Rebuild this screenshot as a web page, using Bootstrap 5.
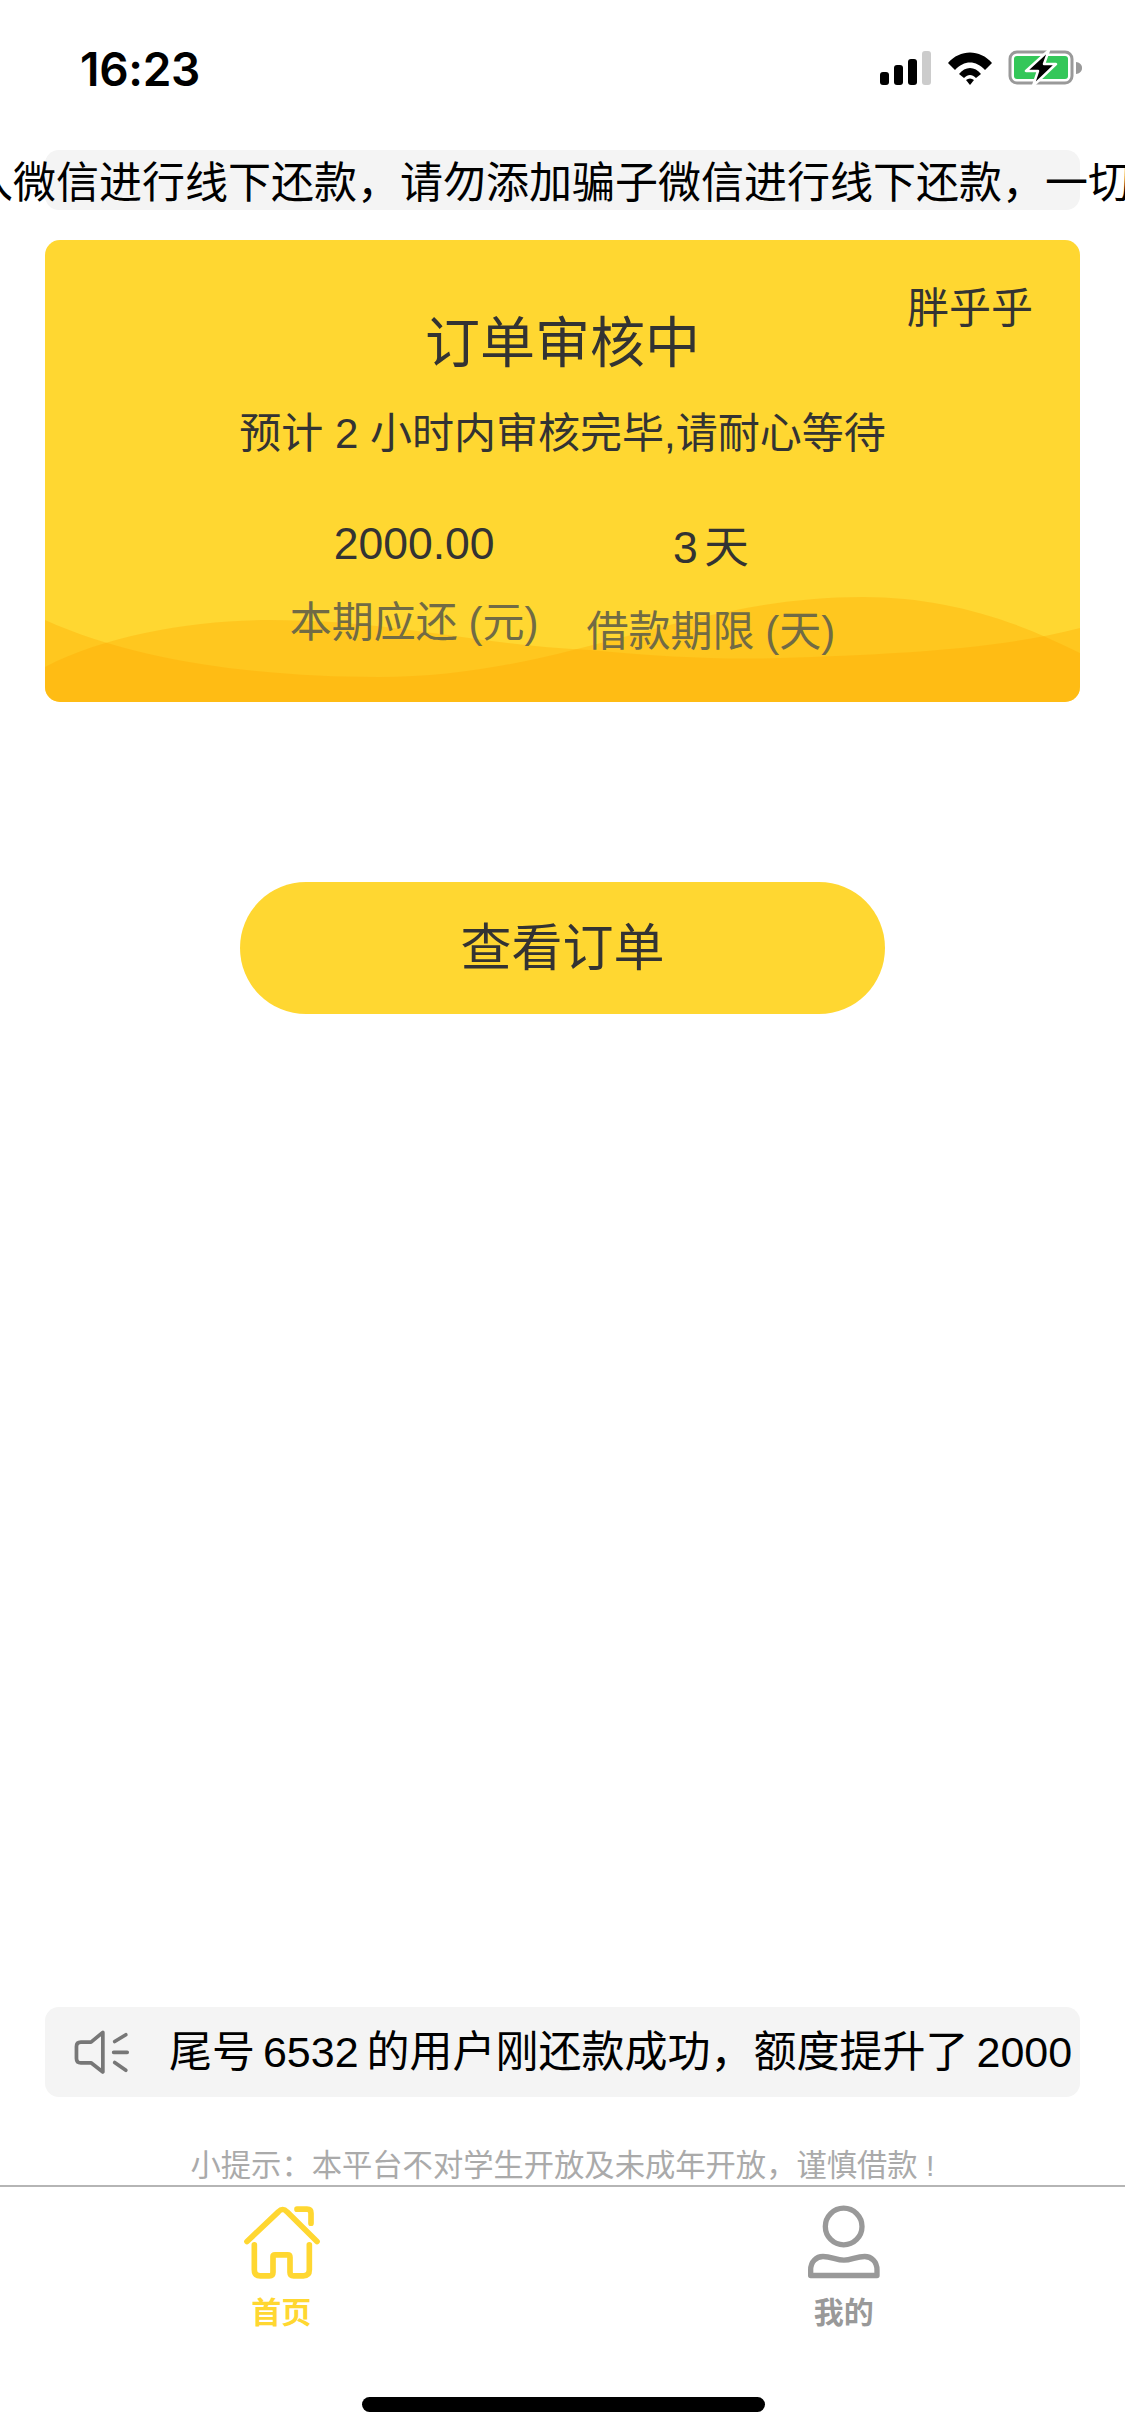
<!DOCTYPE html>
<html lang="zh-CN">

<head>
  <meta charset="UTF-8" />
  <meta name="viewport" content="width=device-width, initial-scale=1" />
  <title>订单审核中</title>
  <link href="https://cdn.jsdelivr.net/npm/bootstrap@5.3.2/dist/css/bootstrap.min.css" rel="stylesheet">
  <style>
    body {
      background: #fff;
      color: #333;
      font-family: "Liberation Sans", "Noto Sans CJK SC", sans-serif;
    }

    .app-shell {
      width: 1125px;
      height: 2436px;
      overflow: hidden;
    }

    /* status bar */
    .status-row {
      height: 150px;
      padding: 42px 42px 0 80px;
    }

    .status-time {
      font-family: Inter, "Liberation Sans", sans-serif;
      font-size: 46px;
      font-weight: 600;
      line-height: 54px;
      color: #000;
      letter-spacing: -.3px;
    }

    .status-icons {
      padding-top: 8px;
      gap: 15px;
    }

    /* grey strips */
    .grey-strip {
      margin: 0 45px;
      background: #f4f4f4;
      border-radius: 14px;
    }

    .notice-strip {
      height: 60px;
      font-size: 43px;
      line-height: 66px;
      color: #000;
      white-space: nowrap;
    }

    .notice-text {
      margin-left: -75px;
    }

    /* order card */
    .order-card {
      margin: 30px 45px 0;
      height: 462px;
      background: #ffd731;
      border: 0;
      border-radius: 15px;
      overflow: hidden;
    }

    .wave-layer {
      position: absolute;
      left: 0;
      top: 0;
    }

    .order-body {
      position: relative;
      padding: 0;
      text-align: center;
    }

    .order-owner {
      position: absolute;
      right: 47px;
      top: 39px;
      font-size: 42px;
      line-height: 60px;
    }

    .order-title {
      padding-top: 63px;
      font-size: 55px;
      line-height: 80px;
    }

    .order-hint {
      margin-top: 21px;
      font-size: 42px;
      line-height: 60px;
    }

    .order-stats {
      margin-top: 50px;
      gap: 48px;
    }

    .stat-value {
      font-size: 44.500px;
      line-height: 60px;
    }

    .stat-days {
      word-spacing: -6px;
    }

    .stat-label {
      font-size: 42px;
      line-height: 60px;
      margin-top: 19px;
      color: #716b45;
      word-spacing: -1px;
    }

    .stat-shift {
      padding-top: 4px;
    }

    .stat-shift .stat-label {
      margin-top: 24px;
    }

    /* button */
    .order-btn {
      display: block;
      width: 645px;
      height: 132px;
      margin: 180px auto 0;
      background: #ffd731;
      border: 0;
      color: #333;
      font-size: 51px;
      line-height: 134px;
      padding: 0;
    }

    /* bottom */
    .repay-strip {
      height: 90px;
      padding-left: 29px;
      font-size: 43px;
      color: #000;
      white-space: nowrap;
    }

    .repay-text {
      margin-left: 39px;
      word-spacing: -4px;
    }

    .tip-line {
      margin-top: 49px;
      height: 39px;
      font-size: 30.300px;
      line-height: 40px;
      color: #aaa;
      text-align: center;
    }

    .tab-row {
      border-top: 2px solid #b5b5b5;
      padding-top: 16px;
      height: 251px;
      margin: 0;
    }

    .tab-label {
      font-size: 30px;
      font-weight: 600;
      line-height: 40px;
      margin-top: 13px;
      color: #999;
    }

    .tab-on {
      color: #ffd731;
    }

    .home-bar {
      position: absolute;
      left: 362px;
      top: 2397px;
      width: 403px;
      height: 15px;
      background: #000;
      border-radius: 8px;
    }
  </style>
</head>

<body>
  <div class="app-shell d-flex flex-column position-relative">
    <div class="status-row d-flex justify-content-between align-items-start">
      <div class="status-time">16:23</div>
      <div class="status-icons d-flex align-items-start">
        <svg width="52" height="36" viewBox="0 0 52 36">
          <rect x="0" y="22" width="9" height="13" rx="3" fill="#000" />
          <rect x="14" y="15" width="9" height="20" rx="3" fill="#000" />
          <rect x="28" y="9" width="9" height="26" rx="3" fill="#000" />
          <rect x="42" y="1" width="9" height="34" rx="3" fill="#ccc" />
        </svg>
        <svg width="46" height="36" viewBox="0 0 46 36">
          <path d="M1 13C13 -1 33 -1 45 13L38 20C29 10 17 10 8 20Z" fill="#000" />
          <path d="M12 24C18 16 28 16 34 24L29 28C25 24 21 24 17 28Z" fill="#000" />
          <path d="M19 30C21.500 28 24.500 28 27 30L23 35Z" fill="#000" />
        </svg>
        <svg width="75" height="36" viewBox="0 0 75 36">
          <rect x="2" y="2" width="62" height="31" rx="7" fill="none" stroke="#999" stroke-width="3" />
          <rect x="6" y="6" width="54" height="23" rx="3" fill="#34c759" />
          <path d="M68 12C71 12.500 74 14 74 18C74 22 71 23.500 68 24Z" fill="#999" />
          <path d="M41 0L18 21H30L25 36L48 14H36Z" fill="#000" stroke="#fff" stroke-width="2.500" stroke-linejoin="round" />
        </svg>
      </div>
    </div>

    <div class="grey-strip notice-strip">
      <div class="notice-text">入微信进行线下还款，请勿添加骗子微信进行线下还款，一切</div>
    </div>

    <div class="card order-card position-relative">
      <svg class="wave-layer" width="1035" height="462" viewBox="0 0 1035 462">
        <path d="M0 380C100 425 230 437 333 437C520 437 640 357 818 357C900 357 970 380 1035 413V462H0Z" fill="#ffa800" fill-opacity=".35" />
        <path d="M0 427C60 395 150 380 224 380C350 380 430 405 545 410C620 417 680 420 735 418C850 414 950 410 1035 388V462H0Z" fill="#ffa800" fill-opacity=".35" />
      </svg>
      <div class="card-body order-body">
        <div class="order-owner">胖乎乎</div>
        <div class="order-title">订单审核中</div>
        <div class="order-hint">预计 2 小时内审核完毕,请耐心等待</div>
        <div class="order-stats d-flex justify-content-center">
          <div>
            <div class="stat-value">2000.00</div>
            <div class="stat-label">本期应还 (元)</div>
          </div>
          <div class="stat-shift">
            <div class="stat-value stat-days">3 天</div>
            <div class="stat-label">借款期限 (天)</div>
          </div>
        </div>
      </div>
    </div>

    <button type="button" class="btn rounded-pill order-btn">查看订单</button>

    <div class="flex-grow-1"></div>

    <div class="grey-strip repay-strip d-flex align-items-center">
      <svg width="56" height="46" viewBox="75 58 165 136">
        <path d="M160 68L125 97H95Q82 97 82 110V145Q82 158 95 158H125L160 185Z" fill="none" stroke="#777" stroke-width="11" stroke-linejoin="round" />
        <path d="M195 95L228 75M192 127H232M195 157L228 180" fill="none" stroke="#777" stroke-width="11" stroke-linecap="round" />
      </svg>
      <div class="repay-text">尾号 6532 的用户刚还款成功，额度提升了 2000</div>
    </div>

    <div class="tip-line">小提示：本平台不对学生开放及未成年开放，谨慎借款 !</div>

    <div class="row g-0 tab-row">
      <div class="col-6 text-center">
        <svg width="80" height="77" viewBox="60 40 240 230">
          <path d="M78 155L172 66Q185 52 198 66L288 155M228 58H258Q270 58 270 70V100" fill="none" stroke="#ffd731" stroke-width="17" stroke-linecap="round" stroke-linejoin="round" />
          <path d="M100 165V240Q100 258 118 258H145Q156 258 156 247V200Q156 195 162 195H200Q207 195 207 202V247Q207 258 218 258H247Q265 258 265 240V165" fill="none" stroke="#ffd731" stroke-width="17" stroke-linecap="round" stroke-linejoin="round" />
        </svg>
        <div class="tab-label tab-on">首页</div>
      </div>
      <div class="col-6 text-center">
        <svg width="80" height="77" viewBox="68 40 240 230">
          <circle cx="187" cy="110" r="55" fill="none" stroke="#999" stroke-width="16" />
          <path d="M88 257V240C88 215 105 200 125 200C150 200 165 211 188 211C210 211 225 200 250 200C270 200 287 215 287 240V257Z" fill="none" stroke="#999" stroke-width="16" stroke-linejoin="round" />
        </svg>
        <div class="tab-label">我的</div>
      </div>
    </div>

    <div class="home-bar"></div>
  </div>

  <script src="https://cdn.jsdelivr.net/npm/bootstrap@5.3.2/dist/js/bootstrap.bundle.min.js"></script>
</body>

</html>
